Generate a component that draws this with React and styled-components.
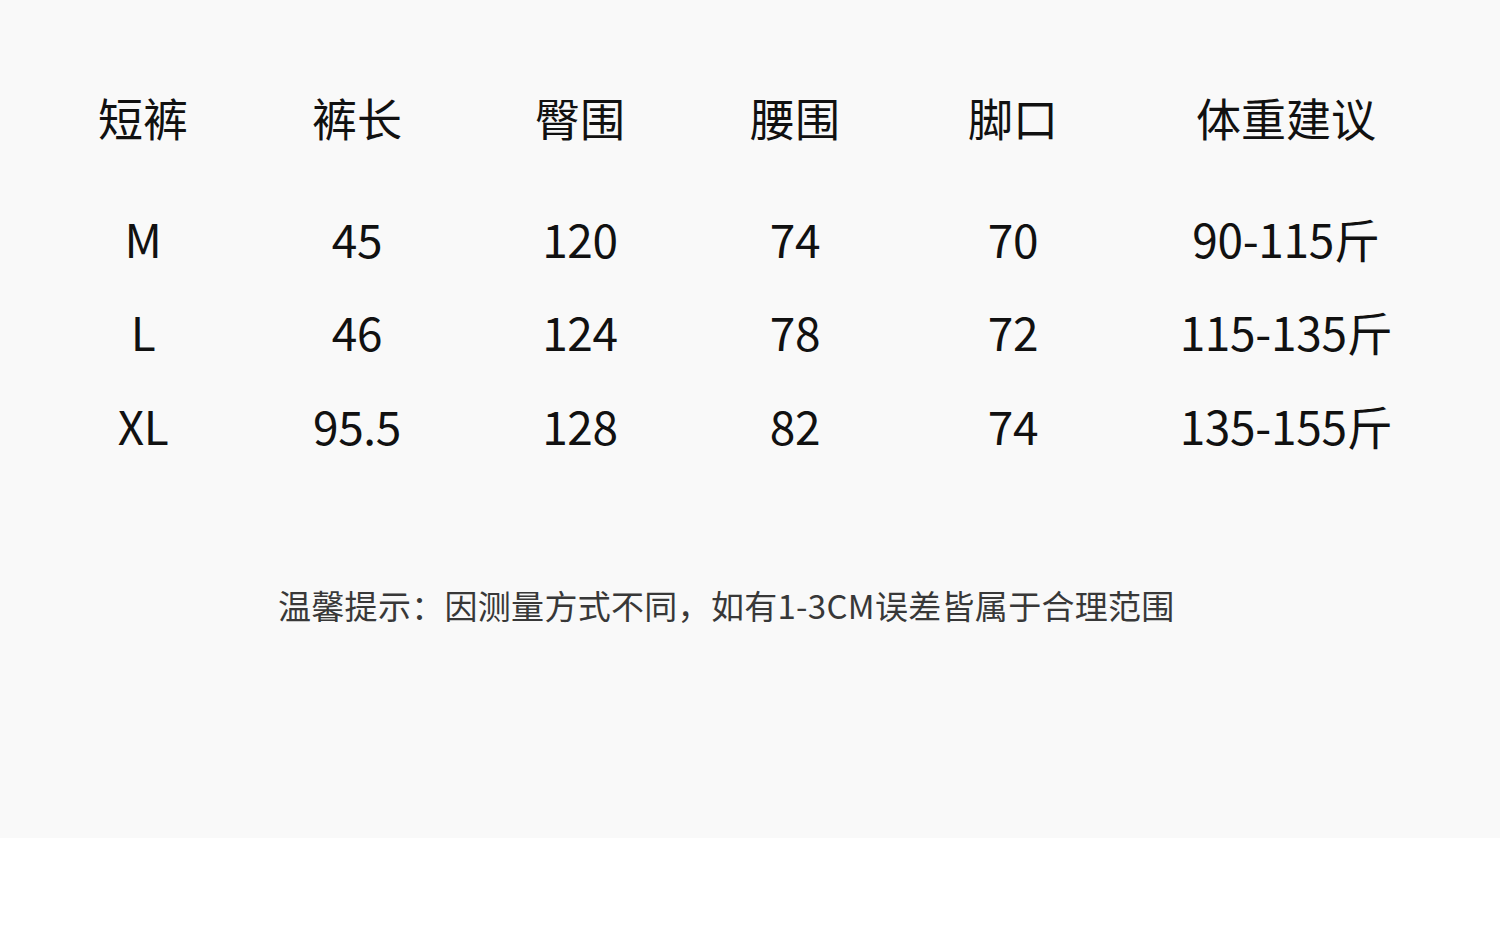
import React from "react";
import styled, { createGlobalStyle } from "styled-components";

const Global = createGlobalStyle`
  html, body { margin: 0; padding: 0; background: #ffffff; }
  body { font-family: "Noto Sans CJK SC", "Noto Sans", sans-serif; }
`;

const Panel = styled.div`
  width: 1500px;
  height: 838px;
  background: #f9f9f9;
  box-sizing: border-box;
  padding-top: 70px;
  display: flex;
  flex-direction: column;
`;

const Table = styled.div`
  display: grid;
  grid-template-columns: 214px 214px 232px 198px 238px 308px;
  padding-left: 36px;
`;

const Row = styled.div`
  display: contents;
`;

const Cell = styled.div`
  height: ${(p) => (p.$head ? "94px" : "93.5px")};
  margin-bottom: ${(p) => (p.$head ? "27px" : "0")};
  display: flex;
  align-items: center;
  justify-content: center;
  font-size: ${(p) => (p.$head ? "45px" : "46px")};
  color: #111111;
  white-space: nowrap;
  letter-spacing: ${(p) => (p.$head ? "0" : "-0.3px")};
`;

const Note = styled.div`
  margin-top: 111px;
  padding-left: 278px;
  font-size: 33px;
  letter-spacing: 0.3px;
  line-height: 44px;
  color: #383838;
  white-space: nowrap;
`;

const head = ["短裤", "裤长", "臀围", "腰围", "脚口", "体重建议"];
const rows = [
  ["M", "45", "120", "74", "70", "90-115斤"],
  ["L", "46", "124", "78", "72", "115-135斤"],
  ["XL", "95.5", "128", "82", "74", "135-155斤"],
];

export default function App() {
  return (
    <>
      <Global />
      <Panel>
        <Table>
          <Row>
            {head.map((h) => (
              <Cell $head key={h}>{h}</Cell>
            ))}
          </Row>
          {rows.map((r) => (
            <Row key={r[0]}>
              {r.map((c, i) => (
                <Cell key={i}>{c}</Cell>
              ))}
            </Row>
          ))}
        </Table>
        <Note>温馨提示：因测量方式不同，如有1-3CM误差皆属于合理范围</Note>
      </Panel>
    </>
  );
}
